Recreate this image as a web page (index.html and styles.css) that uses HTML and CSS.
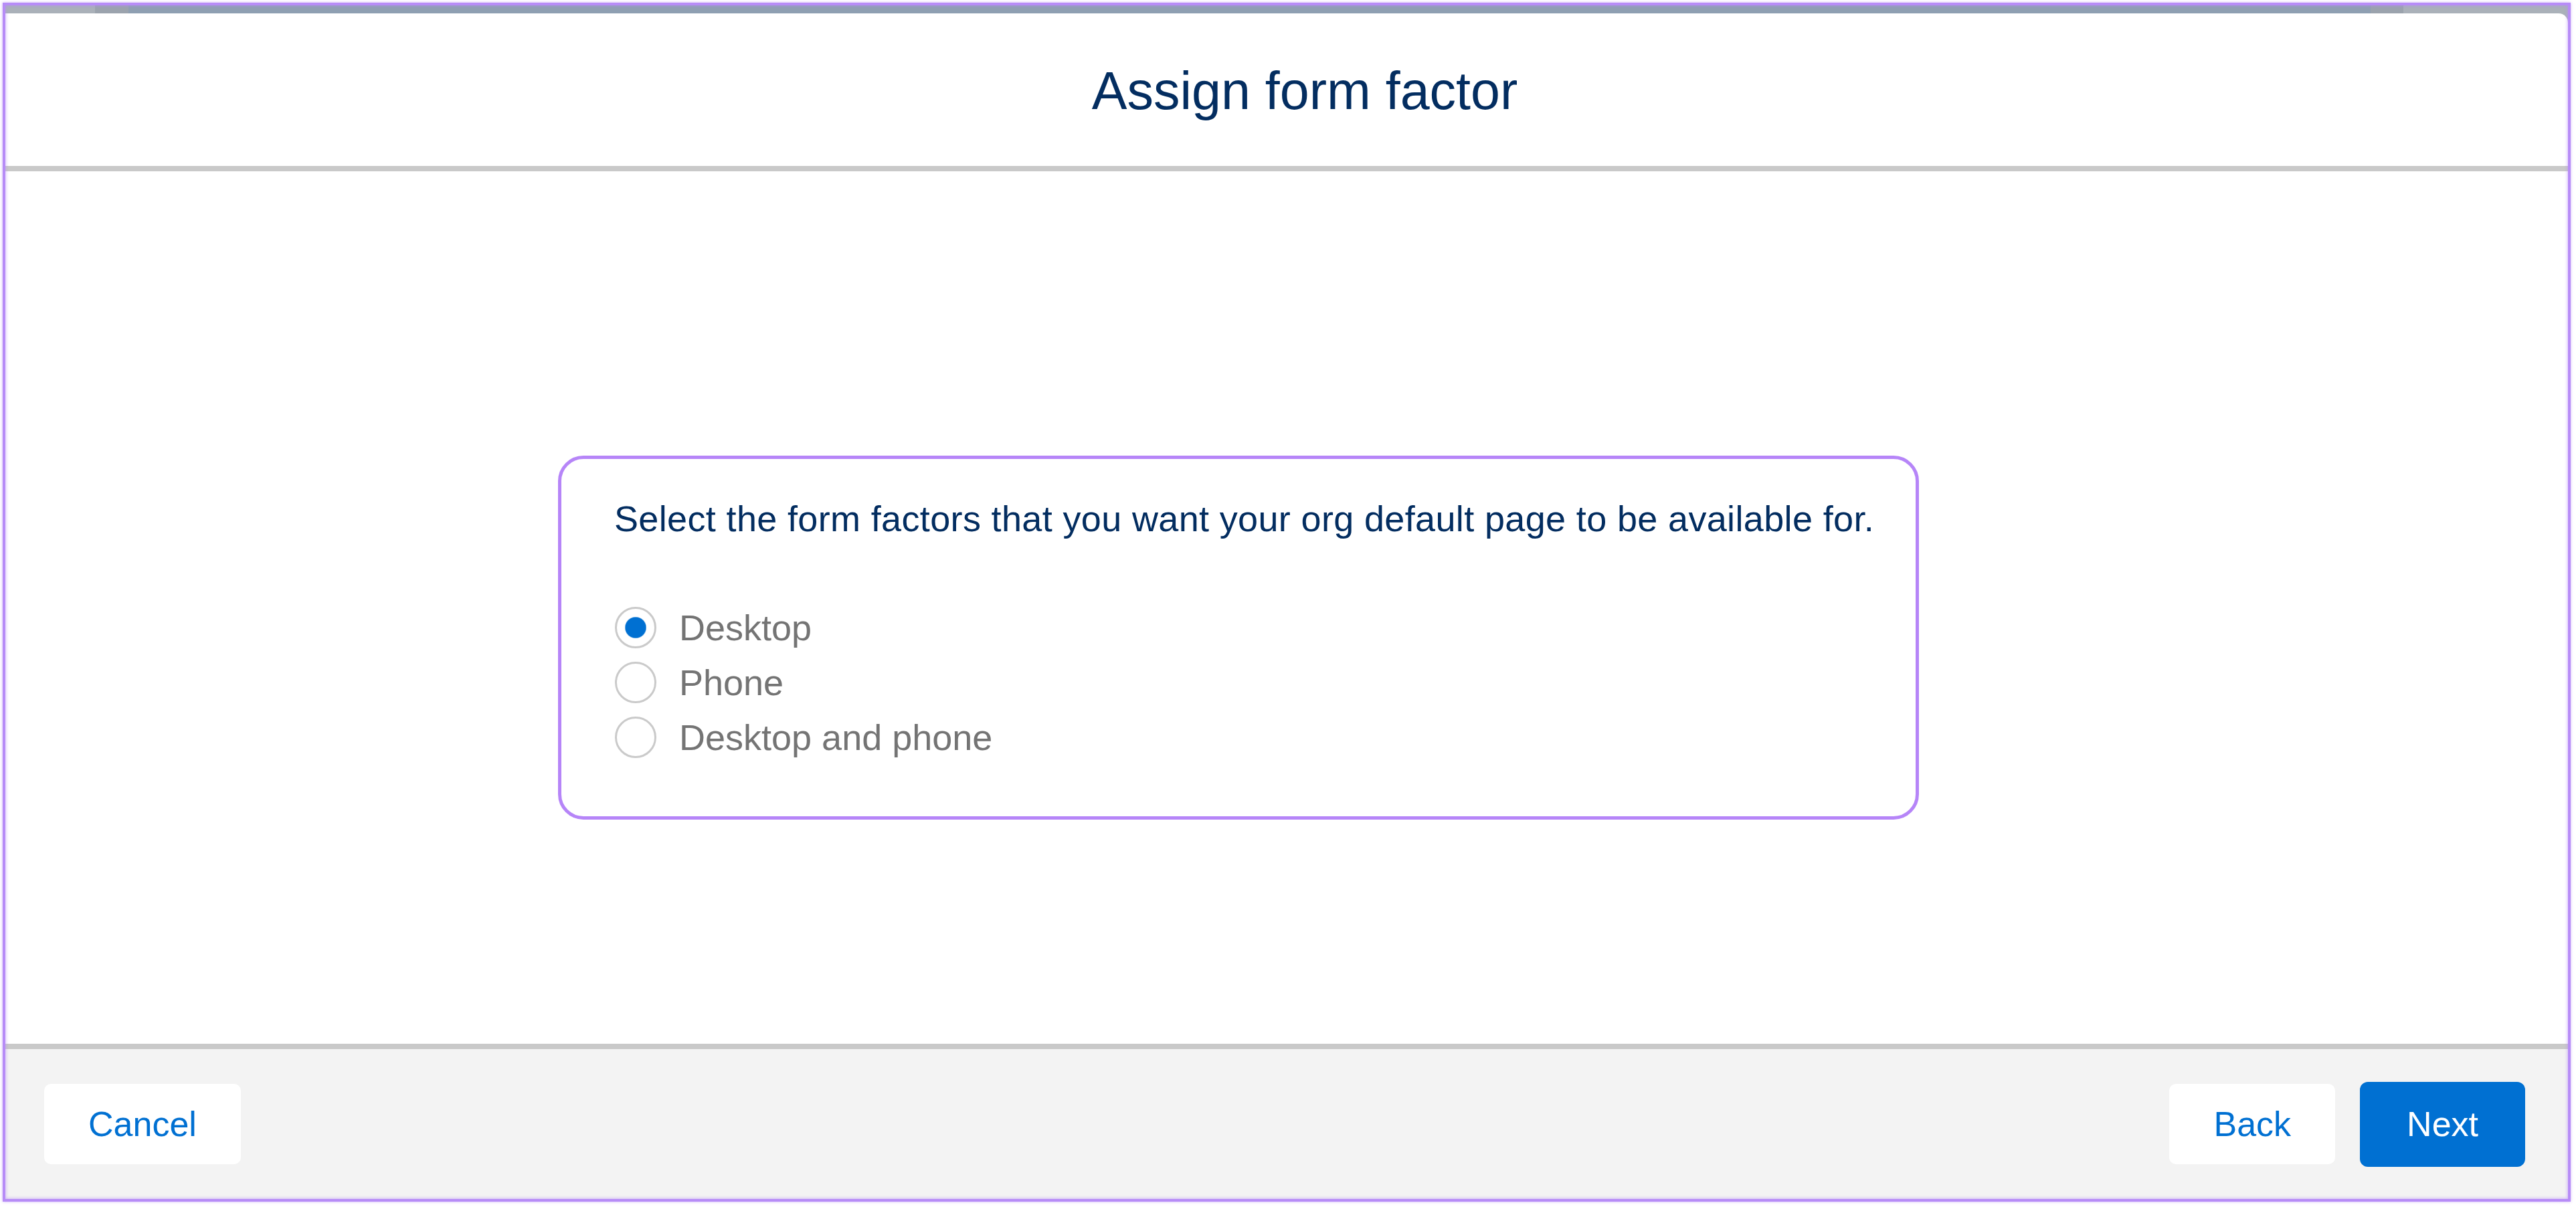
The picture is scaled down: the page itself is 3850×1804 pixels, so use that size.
FILE: index.html
```html
<!DOCTYPE html>
<html lang="en">
<head>
    <meta charset="UTF-8">
    <meta name="viewport" content="width=device-width, initial-scale=1.0">
    <title>Assign form factor</title>
    <link rel="stylesheet" href="styles.css">
</head>
<body>
    <div class="frame">
        <div class="modal">
            <div class="modal-header">
                <h1>Assign form factor</h1>
            </div>

            <div class="modal-body">
                <div class="card">
                    <p class="card-text">Select the form factors that you want your org default page to be available for.</p>
                    <div class="options">
                        <label class="option">
                            <input type="radio" name="form-factor" value="desktop" checked>
                            <span>Desktop</span>
                        </label>
                        <label class="option">
                            <input type="radio" name="form-factor" value="phone">
                            <span>Phone</span>
                        </label>
                        <label class="option">
                            <input type="radio" name="form-factor" value="both">
                            <span>Desktop and phone</span>
                        </label>
                    </div>
                </div>
            </div>

            <div class="modal-footer">
                <button class="btn">Cancel</button>
                <div class="footer-right">
                    <button class="btn">Back</button>
                    <button class="btn btn-brand">Next</button>
                </div>
            </div>
        </div>
    </div>
</body>
</html>
```

FILE: styles.css
```css
        body {
            margin: 0;
            padding: 0;
            background: #fff;
            font-family: "Liberation Sans", Arial, sans-serif;
        }
        .frame {
            position: relative;
            height: 1784px;
            margin: 4px 8px 8px 4px;
            border: 4px solid #b78cf7;
            box-shadow: 0 0 4px rgba(183, 140, 247, 0.7);
            /* blurred page strip behind the modal */
            background: linear-gradient(to right,
                #aab1b9 0, #aab1b9 134px,
                #9ba3ad 134px, #9ba3ad 184px,
                #8e9fb2 184px, #8e9fb2 3535px,
                #9ba3ad 3535px, #9ba3ad 3584px,
                #aab1b9 3584px);
        }
        .frame::after {
            content: "";
            position: absolute;
            top: 0;
            left: 0;
            right: 0;
            bottom: 0;
            pointer-events: none;
            box-shadow: inset 0 0 4px 1px rgba(183, 140, 247, 0.55);
        }
        .modal {
            display: flex;
            flex-direction: column;
            height: 1772px;
            margin-top: 12px;
        }
        .modal-header {
            display: flex;
            align-items: center;
            justify-content: center;
            padding-left: 54px;
            padding-top: 2px;
            box-sizing: border-box;
            height: 236px;
            background: #fff;
            border-bottom: 8px solid #c9c9c9;
            border-top-right-radius: 14px;
        }
        h1 {
            margin: 0;
            font-size: 79px;
            font-weight: normal;
            line-height: 1;
            color: #032d60;
        }
        .modal-body {
            flex: 1;
            background: #fff;
            padding: 425px 0 0 826px;
        }
        .card {
            width: 2034px;
            box-sizing: border-box;
            padding: 59px 40px 77px 79px;
            border: 5px solid #b685f8;
            border-radius: 38px;
        }
        .card-text {
            margin: 0 0 92px 0;
            font-size: 54px;
            line-height: 60px;
            letter-spacing: 0.35px;
            color: #032d60;
        }
        .options {
            display: flex;
            flex-direction: column;
        }
        .option {
            display: flex;
            align-items: center;
            height: 82px;
            font-size: 54px;
            line-height: 60px;
            color: #747474;
        }
        .option input {
            appearance: none;
            -webkit-appearance: none;
            width: 62px;
            height: 62px;
            margin: 0 34px 0 1px;
            border: 3px solid #cacaca;
            border-radius: 50%;
            background: #fff;
            box-sizing: border-box;
        }
        .option input:checked {
            background: radial-gradient(circle, #0070d2 0, #0070d2 15px, #fff 16.5px);
        }
        .modal-footer {
            display: flex;
            align-items: center;
            justify-content: space-between;
            height: 232px;
            box-sizing: border-box;
            padding: 0 64px 0 58px;
            background: #f3f3f3;
            border-top: 8px solid #c9c9c9;
        }
        .footer-right {
            display: flex;
            align-items: center;
            gap: 37px;
        }
        .btn {
            height: 120px;
            padding: 0 66px;
            border: none;
            border-radius: 10px;
            background: #fff;
            color: #0070d2;
            font-family: "Liberation Sans", Arial, sans-serif;
            font-size: 52px;
            cursor: pointer;
        }
        .btn-brand {
            height: 127px;
            padding: 0 70px;
            border-radius: 12px;
            background: #0070d2;
            color: #fff;
        }
```
